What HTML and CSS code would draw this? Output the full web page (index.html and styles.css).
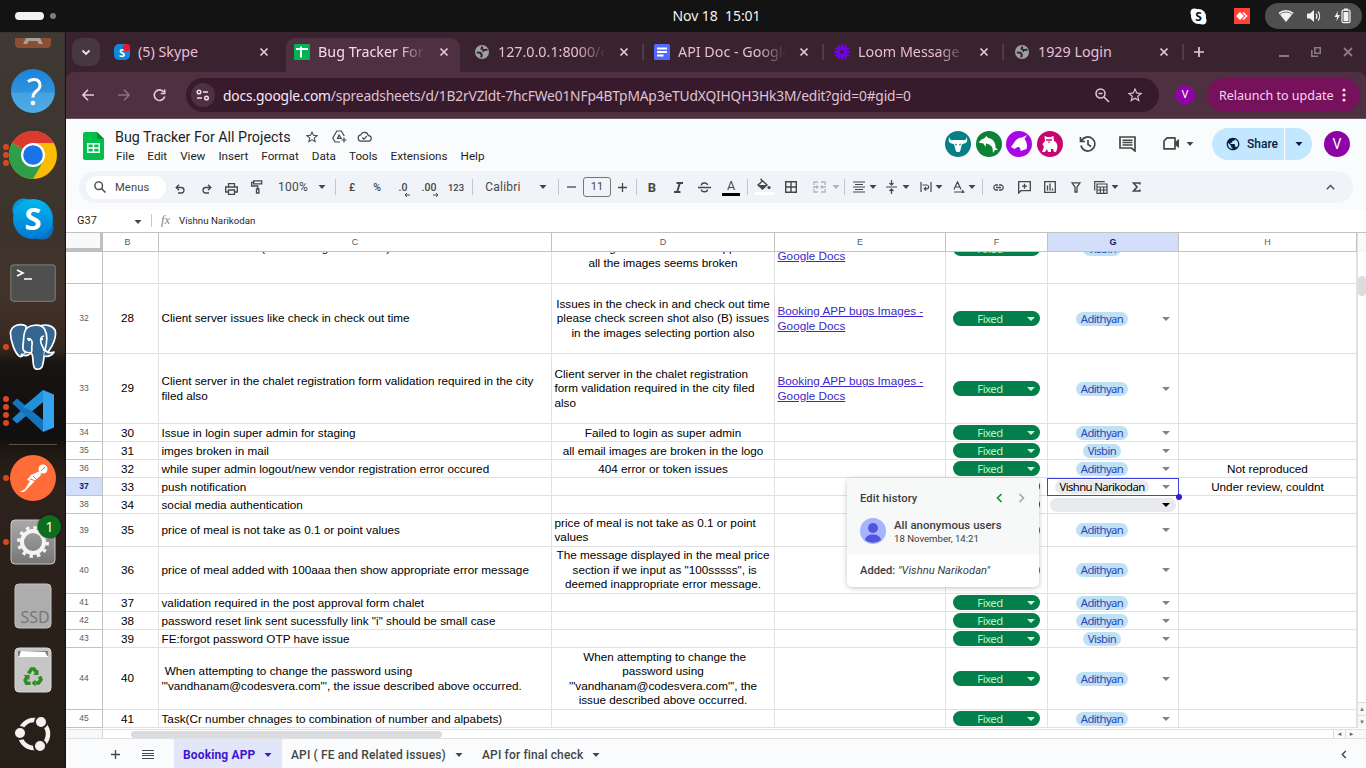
FILE: index.html
```html
<!DOCTYPE html>
<html lang="en">
<head>
<meta charset="utf-8">
<title>Bug Tracker For All Projects</title>
<link rel="stylesheet" href="styles.css">
</head>
<body>
<svg class="defs" width="0" height="0">
  <defs>
    <symbol id="close" viewBox="0 0 10 10"><path d="M1.5 1.5l7 7M8.500 1.500l-7 7" stroke="currentColor" stroke-width="1.700" fill="none"/></symbol>
    <symbol id="caret" viewBox="0 0 8 4"><path d="M.5 0h7L4 4z" fill="currentColor"/></symbol>
    <symbol id="globe" viewBox="0 0 24 24"><path fill="currentColor" d="M12 2C6.480 2 2 6.480 2 12s4.480 10 10 10 10-4.480 10-10S17.520 2 12 2zm-1 17.930c-3.950-.49-7-3.850-7-7.930 0-.62.080-1.210.21-1.790L9 15v1c0 1.100.9 2 2 2v1.930zm6.900-2.540c-.26-.81-1-1.390-1.900-1.390h-1v-3c0-.55-.45-1-1-1H8v-2h2c.55 0 1-.45 1-1V7h2c1.100 0 2-.9 2-2v-.41c2.930 1.190 5 4.060 5 7.410 0 2.080-.8 3.970-2.100 5.390z"/></symbol>
    <symbol id="favglobe" viewBox="0 0 14 14"><circle cx="7" cy="7" r="7" fill="#9aa0a6"/><path d="M1.800 7.500l3.500.3 1.500 1.700-.6 3M7.500 1.500L6.500 3.800 9 5l3.500-.3M9 5L7.500 6.500" stroke="#38232f" stroke-width="2" fill="none"/></symbol>
    <symbol id="star" viewBox="0 0 24 24"><path fill="currentColor" d="M22 9.240l-7.190-.62L12 2 9.190 8.630 2 9.240l5.460 4.730L5.820 21 12 17.270 18.180 21l-1.630-7.030L22 9.240zM12 15.400l-3.760 2.270 1-4.280-3.320-2.880 4.380-.38L12 6.100l1.710 4.040 4.380.38-3.320 2.880 1 4.280L12 15.400z"/></symbol>
  </defs>
</svg>

<header class="topbar">
  <div class="workspaces"><i class="ws-on"></i><i class="ws-off"></i></div>
  <div class="clock">Nov 18&nbsp; 15:01</div>
  <div class="tray">
    <svg width="17" height="17" viewBox="0 0 17 17"><circle cx="8.500" cy="8.500" r="7.500" fill="#fff"/><circle cx="4.500" cy="4.500" r="4" fill="#fff"/><circle cx="12.500" cy="12.500" r="4" fill="#fff"/><text x="8.500" y="13" text-anchor="middle" class="skype-s" fill="#131313">S</text></svg>
    <svg width="16" height="16" viewBox="0 0 16 16"><path fill="#ff4136" d="M0 0h16v16H0z"/><path fill="#fff" d="M2 8l4-4 4 4-4 4z"/><path d="M9 4.500L12.500 8 9 11.500" stroke="#fff" stroke-width="1.600" fill="none"/></svg>
    <div class="status">
      <svg width="16" height="14" viewBox="0 0 16 14"><path d="M0.500 3.800a11.500 11.500 0 0 1 15 0L8 13z" fill="#f2f2f2"/><path d="M1.500 5.600a9.500 9.500 0 0 1 13 0" stroke="#777" stroke-width="1" fill="none"/></svg>
      <svg width="16" height="14" viewBox="0 0 16 14"><path d="M1 4.500h3L8 1v12L4 9.500H1z" fill="#f2f2f2"/><path d="M10 4.500a4 4 0 0 1 0 5M12 2.500a7 7 0 0 1 0 9" stroke="#f2f2f2" stroke-width="1.200" fill="none"/></svg>
      <svg width="17" height="16" viewBox="0 0 17 16"><path d="M4 3L.5 9H3l-.5 4L6 7H3.500z" fill="#f2f2f2"/><rect x="8" y="2.200" width="8" height="12.500" rx="1.500" fill="none" stroke="#f2f2f2" stroke-width="1.200"/><path d="M10 .5h4v2h-4zM9.500 4h5v9.200h-5z" fill="#f2f2f2"/></svg>
    </div>
  </div>
</header>

<div class="desktop">
<aside class="dock">
  <div class="dock-cut"><svg width="36" height="10" viewBox="0 0 36 10"><path d="M0 0h36v6q0 4-4 4H4q-4 0-4-4z" fill="#8a4f35"/><path d="M8 6l3-6h14l3 6h-4l-2-3h-8l-2 3z" fill="#a8a09c"/></svg></div>
  <div class="app"><svg width="48" height="48"><defs><linearGradient id="hg" x2="0" y2="1"><stop offset="0" stop-color="#1b83d8"/><stop offset=".53" stop-color="#2f93dd"/><stop offset=".54" stop-color="#46a2e2"/><stop offset="1" stop-color="#4faae6"/></linearGradient></defs><circle cx="24" cy="24" r="22" fill="url(#hg)"/><path d="M19 14.500Q22 12.500 25 12.500q6 0 6 6 0 3-3.500 5.500-3.500 2.500-3.500 6.500" stroke="#fff" stroke-width="3" fill="none"/><circle cx="24" cy="36" r="2.300" fill="#fff"/></svg></div>
  <div class="app"><span class="dots n3"><i></i><i></i><i></i></span><svg width="48" height="48" viewBox="0 0 48 48"><circle cx="24" cy="24" r="24" fill="#fbbc04"/><path d="M24 24L3.200 12A24 24 0 0 1 44.800 12H24z" fill="#db3a2f"/><path d="M24 24L3.200 12A24 24 0 0 0 24 48L34.400 30z" fill="#2f9e49"/><circle cx="24" cy="24" r="12" fill="#fff"/><circle cx="24" cy="24" r="9.800" fill="#1a73e8"/></svg></div>
  <div class="app"><svg width="44" height="44" viewBox="0 0 44 44"><defs><linearGradient id="sk" x2="0" y2="1"><stop offset="0" stop-color="#00b7f0"/><stop offset="1" stop-color="#0078d4"/></linearGradient></defs><circle cx="13" cy="13" r="11.500" fill="#0797d8"/><circle cx="31" cy="31" r="11.500" fill="#0a6fc0"/><circle cx="22" cy="22" r="20" fill="url(#sk)"/><text x="22" y="33" text-anchor="middle" class="dock-s">S</text></svg></div>
  <div class="app"><svg width="46" height="38"><rect x=".8" y=".8" width="44.500" height="36.500" rx="3.500" fill="#4f4f4f" stroke="#77736f" stroke-width="1.200"/><path d="M7 6l6 3-6 3" stroke="#fff" stroke-width="1.700" fill="none"/><path d="M14 15h8" stroke="#fff" stroke-width="1.500"/></svg></div>
  <div class="app"><span class="dots n1"><i></i></span><svg width="48" height="48" viewBox="0 0 48 48"><g fill="#336791" stroke="#fff" stroke-width="1.700" stroke-linejoin="round"><path d="M31 3c5-2 12-1 15 4 2 6-2 16-7 22l-6 2z"/><path d="M17 3C11 0 3 2 1.500 9 1 17 6 30 10 33c3 2 5-2 8-5z"/><path d="M16 8c3-7 17-8 20-1 3 6 2 13 0 20-1 5-1 12-3 17-2 3-7 3-8 0-2-6 0-12-3-14-6 0-9-2-8-8 1-5 0-9 2-14z"/><path d="M36 27c2 3 6 3 9 2-2 4-7 5-10 4M22 30c-3 3-7 3-10 1" /><path d="M18 16c3-1 6 1 5 6-1 3 1 5-1 8M35 13c-3 0-4 3-3 7 1 3 3 5 3 8" fill="none"/></g><circle cx="20" cy="17" r="1.200" fill="#fff"/><circle cx="33" cy="16" r="1.200" fill="#fff"/></svg></div>
  <div class="app"><span class="dots n4"><i></i><i></i><i></i><i></i></span><svg width="42" height="42" viewBox="0 0 42 42"><path d="M31 0v12L5 33.500 0 29z" fill="#1c84cf"/><path d="M31 42V30L5 8.500 0 13z" fill="#1474bd"/><path d="M31 0v12L20 21 11 17z" fill="#2191dc"/><path d="M31 0l11 4.500v33L31 42z" fill="#35a3ed"/></svg></div>
  <div class="dock-line"></div>
  <div class="app"><span class="dots n1"><i></i></span><svg width="46" height="46" viewBox="0 0 46 46"><circle cx="23" cy="23" r="23" fill="#ff6c37"/><circle cx="33" cy="14" r="4.500" fill="#fff"/><path d="M30 16l-9 4-4 5 3 1-5 8-5 3h4l9-9 8-8z" fill="#fff"/><path d="M31 16l4-4M20 24l6 2M23 21l4 4" stroke="#ff6c37" stroke-width="1"/></svg></div>
  <div class="app"><span class="dots n1"><i></i></span><svg width="46" height="46" viewBox="0 0 46 46"><defs><linearGradient id="gg" x2="0" y2="1"><stop offset="0" stop-color="#aaa"/><stop offset="1" stop-color="#767676"/></linearGradient></defs><rect x="1" y="1" width="44" height="44" rx="4" fill="url(#gg)" stroke="#c8c8c8"/><circle cx="23" cy="23" r="11" fill="none" stroke="#f4f4f2" stroke-width="4"/><circle cx="23" cy="23" r="14" fill="none" stroke="#f4f4f2" stroke-width="4" stroke-dasharray="3.300 4.030"/></svg><b class="badge">1</b></div>
  <div class="app"><svg width="38" height="46" viewBox="0 0 38 46"><rect x="1" y="1" width="36" height="44" rx="4" fill="#adadad" stroke="#c4c4c4"/><text x="21" y="39.500" text-anchor="middle" class="ssd">SSD</text></svg></div>
  <div class="app"><svg width="38" height="46" viewBox="0 0 38 46"><rect x="1" y="1" width="36" height="44" rx="4" fill="#c6c6c6" stroke="#d8d8d8"/><path d="M4 4h30v5H4z" fill="#7e7e7e"/><path d="M5 10l2-6 24 1 3 5z" fill="#fff"/><g fill="none" stroke="#2c8c25" stroke-width="3.600"><path d="M14.500 26.500l3-4.500h2.500l2.500 3.500"/><path d="M25.500 29.500l1.500 3-2.500 3.500h-3"/><path d="M16.500 36.200h-4l-1.300-3 2-3.500"/></g><path d="M24.500 22.500v5.500h-5.500zM21.500 32.500v7l-4-3.500zM9.500 28h6v5z" fill="#2c8c25"/></svg></div>
  <div class="app"><svg width="38" height="38" viewBox="0 0 38 38"><circle cx="20" cy="19" r="14" fill="none" stroke="#f4f1ef" stroke-width="4.500"/><g fill="#f4f1ef" stroke="#2a221e" stroke-width="2"><circle cx="6" cy="18" r="6"/><circle cx="27" cy="7" r="6"/><circle cx="26" cy="31" r="6"/></g></svg></div>
</aside>

<main class="window">
  <div class="tabstrip">
    <button class="tab-search"><svg width="10" height="7" viewBox="0 0 10 7"><path d="M1.500 1.500L5 5l3.500-3.500" stroke="#f0e0ea" stroke-width="1.800" fill="none"/></svg></button>
    <div class="tab"><svg class="fav" width="16" height="16" viewBox="0 0 16 16"><rect width="16" height="16" rx="5" fill="#1287d8"/><text x="8" y="12.500" text-anchor="middle" class="fav-s">S</text><circle cx="12.500" cy="3.500" r="3.700" fill="#f5102e"/></svg><span class="tt t1">(5) Skype</span><svg class="x" width="10" height="10"><use href="#close"/></svg></div>
    <div class="tab active"><svg class="fav" width="16" height="16"><rect width="16" height="16" rx="1" fill="#00b551"/><path d="M2 5h12M7 2.500v11" stroke="#fff" stroke-width="2"/></svg><span class="tt t2">Bug Tracker For All</span><svg class="x" width="10" height="10"><use href="#close"/></svg></div>
    <div class="tab"><svg class="fav" width="16" height="14" viewBox="-1 0 16 14"><use href="#favglobe" width="14" height="14"/></svg><span class="tt t3">127.0.0.1:8000/cc</span><svg class="x" width="10" height="10"><use href="#close"/></svg><i class="sep"></i></div>
    <div class="tab"><svg class="fav" width="16" height="16"><rect width="16" height="16" rx="1.500" fill="#5468ff"/><path d="M3 4.500h10M3 8h10M3 11.500h6.500" stroke="#fff" stroke-width="1.900"/></svg><span class="tt t4">API Doc - Google D</span><svg class="x" width="10" height="10"><use href="#close"/></svg><i class="sep"></i></div>
    <div class="tab"><svg class="fav" width="16" height="16" viewBox="-8 -8 16 16"><g stroke="#7400f0" stroke-width="2.100"><path d="M0-8V8M-8 0H8M-4-6.900L4 6.900M4-6.900L-4 6.900M-6.900-4L6.900 4M6.900-4L-6.900 4"/></g><circle r="4.200" fill="#7400f0"/><circle r="2" fill="#38232f"/></svg><span class="tt t5">Loom Message - 1</span><svg class="x" width="10" height="10"><use href="#close"/></svg><i class="sep"></i></div>
    <div class="tab"><svg class="fav" width="16" height="14" viewBox="-1 0 16 14"><use href="#favglobe" width="14" height="14"/></svg><span class="tt t6">1929 Login</span><svg class="x" width="10" height="10"><use href="#close"/></svg><i class="sep"></i></div>
    <svg class="newtab" width="12" height="12"><path d="M6 1v10M1 6h10" stroke="#e4cddb" stroke-width="1.700"/></svg>
    <div class="winctl">
      <svg width="10" height="12"><path d="M0 10h10" stroke="#8b7a84" stroke-width="2"/></svg>
      <svg width="10" height="10"><path d="M3.800.8h5.500v5.500H3.800zM.8 3v6.200H7" stroke="#8b7a84" stroke-width="1.600" fill="none"/></svg>
      <svg width="10" height="10"><path d="M1 1l8 8M9 1L1 9" stroke="#8b7a84" stroke-width="1.800"/></svg>
    </div>
  </div>

  <div class="navbar">
    <svg width="12" height="12" viewBox="0 0 12 12"><path d="M12 6H1M6 .7L.9 6 6 11.300" stroke="#ecc5dc" stroke-width="1.600" fill="none"/></svg>
    <svg width="12" height="12" viewBox="0 0 12 12"><path d="M0 6h11M6 .7L11.100 6 6 11.300" stroke="#8f6c80" stroke-width="1.600" fill="none"/></svg>
    <svg width="13" height="13" viewBox="0 0 13 13"><path d="M10.800 3A5.300 5.300 0 1 0 11.700 7.500M11.700.5V4.500H7.700" stroke="#ecc5dc" stroke-width="1.600" fill="none"/></svg>
    <div class="omnibox">
      <span class="site"><svg width="14" height="12" viewBox="0 0 14 12"><g stroke="#eedfe8" stroke-width="1.500" fill="none"><circle cx="3" cy="3" r="1.800"/><path d="M7 3h5M1 9h5"/><circle cx="10.500" cy="9" r="1.800"/></g></svg></span>
      <span class="url"><em>docs.google.com</em>/spreadsheets/d/1B2rVZldt-7hcFWe01NFp4BTpMAp3eTUdXQIHQH3Hk3M/edit?gid=0#gid=0</span>
      <svg width="15" height="15" viewBox="0 0 15 15"><g stroke="#e0c6d5" stroke-width="1.500" fill="none"><circle cx="5.500" cy="5.500" r="4.500"/><path d="M9 9l5 5M3.500 5.500h4"/></g></svg>
      <svg class="bm" width="18" height="18"><use href="#star"/></svg>
    </div>
    <span class="profile">V</span>
    <div class="relaunch"><span>Relaunch to update</span><svg width="4" height="14"><g fill="#fbd3ef"><circle cx="2" cy="2" r="1.600"/><circle cx="2" cy="7" r="1.600"/><circle cx="2" cy="12" r="1.600"/></g></svg></div>
  </div>

  <div class="dochead">
    <svg class="logo" width="21" height="28" viewBox="0 0 21 28"><path d="M2 0h12l7 7v19q0 2-2 2H2q-2 0-2-2V2q0-2 2-2z" fill="#00c04b"/><path d="M14 0l7 7h-7z" fill="#00962f"/><path d="M4 11h13v10H4zM5.500 12.500v2.700h4.200v-2.700zM11.300 12.500v2.700h4.200v-2.700zM5.500 16.800v2.700h4.200v-2.700zM11.300 16.800v2.700h4.200v-2.700z" fill="#fff" fill-rule="evenodd"/></svg>
    <div class="doctitle">
      <div class="titleline"><h1>Bug Tracker For All Projects</h1>
        <svg width="14" height="14" viewBox="1 1 22 22"><use href="#star" width="24" height="24"/></svg>
        <svg width="15" height="13" viewBox="0 0 15 13"><g fill="none" stroke="#444746" stroke-width="1.200"><path d="M8 12H3L.8 8 4.800 1h4.500l3 5M5.500 8.300L7.100 5l2 3.300z"/><path d="M12 7.500v5M9.500 10h5"/></g></svg>
        <svg width="15" height="11" viewBox="0 0 15 11"><path d="M4 10.200a3.200 3.200 0 0 1-.3-6.300A4 4 0 0 1 11.300 4.600a2.800 2.800 0 0 1 .3 5.600z" fill="none" stroke="#444746" stroke-width="1.200"/><path d="M5.200 6.500l1.600 1.600 3-3" fill="none" stroke="#444746" stroke-width="1.200"/></svg>
      </div>
      <nav class="menus"><span>File</span><span>Edit</span><span>View</span><span>Insert</span><span>Format</span><span>Data</span><span>Tools</span><span>Extensions</span><span>Help</span></nav>
    </div>
    <div class="people">
      <svg width="26" height="26" viewBox="0 0 26 26"><circle cx="13" cy="13" r="13" fill="#077f86"/><path d="M4.500 6c0 3 1.500 3.500 5 3h7c3.500.5 5 0 5-3 1.500 3 1 6-2.500 6.500l-2.200 1-1.300 5.500-1 2h-3l-1-2-1.300-5.500-2.200-1C3.500 12 3 9 4.500 6z" fill="#fff"/><path d="M10 13l2 1M16 13l-2 1" stroke="#077f86"/></svg>
      <svg width="26" height="26" viewBox="0 0 26 26"><circle cx="13" cy="13" r="13" fill="#0b8235"/><path d="M2.500 11.500c1.500-1 2.500-3.500 5.500-4L10.500 5l1.500 2c5 .5 8 5 7.500 9.500L22 19l-3 0-2 3-.5-5c-1-2.500-3.500-4-6.500-4.500L9.500 16 7.500 12.500z" fill="#fff"/></svg>
      <svg width="26" height="26" viewBox="0 0 26 26"><circle cx="13" cy="13" r="13" fill="#a808e8"/><path d="M5 16l5-7 3-2 3-.5L21 4l-2.500 4c2.500 3 3 7 2 10l-6 2c0-3-1-4.500-3-4l-3 2z" fill="#fff"/></svg>
      <svg width="26" height="26" viewBox="0 0 26 26"><circle cx="13" cy="13" r="13" fill="#c9056d"/><path d="M7.500 5l3 1h3l3-1 .5 5c3 1 4 5 3 8l-1 3h-2l-1-3h-2v3h-3l-1-3-2 3H5l2-5-1.500-3 2.500-3z" fill="#fff"/><path d="M9 9h6M12 10.500v1.500" stroke="#c9056d" stroke-width="1.300"/></svg>
      <svg width="17" height="16" viewBox="0 0 17 16"><g fill="none" stroke="#444746" stroke-width="1.700"><path d="M2.500 5A7 7 0 1 1 2 9.500M1.500 1v4.500H6M9 4v4.500l3.200 2"/></g></svg>
      <svg width="17" height="16" viewBox="0 0 17 16"><path d="M1 1h15v14l-3.500-3H1z" fill="none" stroke="#444746" stroke-width="1.700"/><path d="M3.500 4.200h10M3.500 6.600h10M3.500 9h10" stroke="#444746" stroke-width="1.500"/></svg>
      <svg width="17" height="13" viewBox="0 0 17 13"><path d="M4 .9h8v11H1V4z" fill="none" stroke="#444746" stroke-width="1.700" stroke-linejoin="round"/><path d="M12 5l4-3v9l-4-3z" fill="#444746"/></svg>
      <svg class="g" width="8" height="4"><use href="#caret"/></svg>
    </div>
    <div class="share"><span><svg width="14" height="14" viewBox="1 1 22 22"><use href="#globe" width="24" height="24"/></svg>Share</span><span><svg width="8" height="4"><use href="#caret"/></svg></span></div>
    <div class="avatar">V</div>
  </div>

  <div class="toolwrap">
  <div class="tools">
    <div class="msearch"><svg width="12" height="12" viewBox="0 0 12 12"><circle cx="4.700" cy="4.700" r="3.800" fill="none" stroke="#444746" stroke-width="1.400"/><path d="M7.500 7.500L11.500 11.500" stroke="#444746" stroke-width="1.500"/></svg>Menus</div>
    <svg class="lo" width="11" height="10" viewBox="0 0 11 10"><path d="M4 .8L1.200 3.500 4 6.200M1.500 3.500h5.200a2.800 2.800 0 0 1 0 5.500H3" fill="none" stroke="#444746" stroke-width="1.300"/></svg>
    <svg class="lo" width="11" height="10" viewBox="0 0 11 10"><path d="M7 .8l2.800 2.700L7 6.200M9.500 3.500H4.300a2.800 2.800 0 0 0 0 5.500H8" fill="none" stroke="#444746" stroke-width="1.300"/></svg>
    <svg class="lo" width="13" height="12" viewBox="0 0 13 12"><g fill="none" stroke="#444746" stroke-width="1.300"><path d="M3.500 3.500v-3h6v3M3 9H.7V4h11.600v5H10"/><path d="M3.500 7h6v4.300h-6z"/></g></svg>
    <svg width="12" height="14" viewBox="0 0 12 14"><g fill="none" stroke="#444746" stroke-width="1.300"><path d="M2.700.8h8v3h-8zM2.700 2.300H.7V6h6v3"/><path d="M5.500 9h2.400v4H5.500z"/></g></svg>
    <span class="t">100%</span>
    <svg class="c" width="8" height="4"><use href="#caret"/></svg><i class="d"></i>
    <span class="s">£</span><span class="s">%</span>
    <span class="s dec">.0<svg width="6" height="4"><path d="M6 2H1M3 0L1 2l2 2" stroke="#444746" fill="none"/></svg></span>
    <span class="s dec">.00<svg width="6" height="4"><path d="M0 2h5M3 0l2 2-2 2" stroke="#444746" fill="none"/></svg></span>
    <span class="s n">123</span><i class="d"></i>
    <span class="t">Calibri</span><svg class="c" width="8" height="4"><use href="#caret"/></svg><i class="d"></i>
    <svg width="9" height="2"><path d="M0 1h9" stroke="#444746" stroke-width="1.300"/></svg>
    <span class="size">11</span>
    <svg width="9" height="9"><path d="M0 4.500h9M4.500 0v9" stroke="#444746" stroke-width="1.300"/></svg><i class="d"></i>
    <b class="bold">B</b>
    <svg width="9" height="11" viewBox="0 0 9 11"><path d="M2.500 1h6.500M0 10h6.500M5.800 1L3.200 10" stroke="#444746" stroke-width="1.900"/></svg>
    <svg width="13" height="11" viewBox="0 0 13 11"><path d="M0 5.500h13M3.300 3.500C3.300.2 9 .2 9.500 3M3.300 7.500c.3 3 6.200 3 6.200 0" stroke="#444746" stroke-width="1.400" fill="none"/></svg>
    <span class="acol">A</span><i class="d"></i>
    <svg class="fill" width="19" height="17" viewBox="0 0 19 17"><path d="M5.500.8L7.500 3 3 7l4.500 4L12 7 7.500 2.800" fill="none" stroke="#444746" stroke-width="1.400"/><path d="M3.500 7h8L7.500 11z" fill="#444746"/><circle cx="14" cy="9.500" r="1.600" fill="#444746"/><path d="M0 14h19v3H0z" fill="#fff"/></svg>
    <svg width="12" height="12"><path d="M.7.7h10.600v10.600H.7zM6 .7v10.600M.7 6h10.600" fill="none" stroke="#444746" stroke-width="1.400"/></svg>
    <svg width="13" height="12" viewBox="0 0 13 12"><g stroke="#b1b4b8" stroke-width="1.300" fill="none"><path d="M5 1H1v3M8 1h4v3M5 11H1V8M8 11h4V8M0 6h5M13 6H8M3.500 4.500L5 6 3.500 7.500M9.500 4.500L8 6l1.500 1.500"/></g></svg>
    <svg class="c dim" width="8" height="4"><use href="#caret"/></svg><i class="d"></i>
    <svg width="12" height="12"><path d="M0 1h12M2 3.500h8M0 6h12M2 8.500h8M0 11h12" stroke="#444746" stroke-width="1.200"/></svg>
    <svg class="c" width="8" height="4"><use href="#caret"/></svg>
    <svg width="11" height="14" viewBox="0 0 11 14"><path d="M0 7h11M5.500 0v4.500M3.500 3l2 2 2-2M5.500 14V9.500M3.500 11l2-2 2 2" stroke="#444746" stroke-width="1.200" fill="none"/></svg>
    <svg class="c" width="8" height="4"><use href="#caret"/></svg>
    <svg class="e" width="12" height="12" viewBox="0 0 12 12"><path d="M1 1v10M11 1v10M2.500 4h4.200a1.800 1.800 0 0 1 0 3.800H4.500M6 6L4.300 7.800 6 9.600" stroke="#444746" stroke-width="1.200" fill="none"/></svg>
    <svg class="c" width="8" height="4"><use href="#caret"/></svg>
    <svg class="e" width="12" height="12" viewBox="0 0 12 12"><path d="M1 8.500L4.500.8 8 8.500M2.300 6h4.400M1 11h9.500M9 9.300l1.800 1.700L9 12" stroke="#444746" stroke-width="1.200" fill="none"/></svg>
    <svg class="c" width="8" height="4"><use href="#caret"/></svg><i class="d"></i>
    <svg width="13" height="7" viewBox="0 0 13 7"><path d="M6 6H3.500a2.700 2.700 0 0 1 0-5H6M7 1h2.500a2.700 2.700 0 0 1 0 5H7M4 3.500h5" stroke="#444746" stroke-width="1.300" fill="none"/></svg>
    <svg width="13" height="13" viewBox="0 0 13 13"><path d="M.7 12V.7h11.600v9H3zM6.500 2.700v5M4 5.200h5" stroke="#444746" stroke-width="1.300" fill="none"/></svg>
    <svg width="12" height="12"><path d="M.7.7h10.600v10.600H.7zM3.500 9.500v-5M6 9.500v-7M8.500 9.500V7.500" stroke="#444746" stroke-width="1.300" fill="none"/></svg>
    <svg width="10" height="11" viewBox="0 0 10 11"><path d="M1 .8h8L6 5v5H4V5z" stroke="#444746" stroke-width="1.300" fill="none"/></svg>
    <svg width="14" height="13" viewBox="0 0 14 13"><path d="M.7 9.500V.7h10M3 3h10v9.300H3zM3 6h10M3 9h10M6.300 6v6M9.700 6v6" stroke="#444746" stroke-width="1.200" fill="none"/></svg>
    <svg class="c" width="8" height="4"><use href="#caret"/></svg>
    <svg width="9" height="10" viewBox="0 0 9 10"><path d="M7.800 2.500V1H1.500L5 5 1.500 9h6.300V7.500" stroke="#444746" stroke-width="1.700" fill="none"/></svg>
    <i></i>
    <svg width="9" height="6"><path d="M.8 5.200L4.500 1.500l3.700 3.700" stroke="#444746" stroke-width="1.300" fill="none"/></svg>
  </div>
  </div>

  <div class="fbar"><span class="ref">G37</span><svg width="8" height="4"><use href="#caret"/></svg><i></i><span class="fx">fx</span><span class="fval">Vishnu Narikodan</span></div>

  <div class="gridarea">
    <div class="sheet">
      <div class="row colhead"><div class="corner"></div><div>B</div><div>C</div><div>D</div><div>E</div><div>F</div><div class="sel">G</div><div>H</div></div>
      <div class="body"><div class="rows">
        <div class="row r70"><div>31</div><div>27</div><div class="l">Client server issue (mobile image alteration)</div><div>In the booking view section<br>image section in mobile app<br>all the images seems broken</div><div class="l"><a>Booking APP bugs Images -<br>Google Docs</a></div><div><span class="fixed">Fixed</span></div><div class="as"><span class="chip">Visbin</span></div><div></div></div>
        <div class="row r70"><div>32</div><div>28</div><div class="l">Client server issues like check in check out time</div><div>Issues in the check in and check out time<br>please check screen shot also (B) issues<br>in the images selecting portion also</div><div class="l"><a>Booking APP bugs Images -<br>Google Docs</a></div><div><span class="fixed">Fixed</span></div><div class="as"><span class="chip">Adithyan</span></div><div></div></div>
        <div class="row r70"><div>33</div><div>29</div><div class="l">Client server in the chalet registration form validation required in the city<br>filed also</div><div class="l">Client server in the chalet registration<br>form validation required in the city filed<br>also</div><div class="l"><a>Booking APP bugs Images -<br>Google Docs</a></div><div><span class="fixed">Fixed</span></div><div class="as"><span class="chip">Adithyan</span></div><div></div></div>
        <div class="row r18"><div>34</div><div>30</div><div class="l">Issue in login super admin for staging</div><div>Failed to login as super admin</div><div></div><div><span class="fixed">Fixed</span></div><div class="as"><span class="chip">Adithyan</span></div><div></div></div>
        <div class="row r18"><div>35</div><div>31</div><div class="l">imges broken in mail</div><div>all email images are broken in the logo</div><div></div><div><span class="fixed">Fixed</span></div><div class="as"><span class="chip">Visbin</span></div><div></div></div>
        <div class="row r18"><div>36</div><div>32</div><div class="l">while super admin logout/new vendor registration error occured</div><div>404 error or token issues</div><div></div><div><span class="fixed">Fixed</span></div><div class="as"><span class="chip">Adithyan</span></div><div>Not reproduced</div></div>
        <div class="row r18"><div class="sel">37</div><div>33</div><div class="l">push notification</div><div></div><div></div><div><span class="fixed red"></span></div><div class="as cur"><span class="chip grey">Vishnu Narikodan</span></div><div>Under review, couldnt</div></div>
        <div class="row r18"><div>38</div><div>34</div><div class="l">social media authentication</div><div></div><div></div><div><span class="fixed red"></span></div><div class="as empty"><span class="chip grey wide"></span></div><div></div></div>
        <div class="row r33"><div>39</div><div>35</div><div class="l">price of meal is not take as 0.1 or point values</div><div class="l">price of meal is not take as 0.1 or point<br>values</div><div></div><div><span class="fixed">Fixed</span></div><div class="as"><span class="chip">Adithyan</span></div><div></div></div>
        <div class="row r47"><div>40</div><div>36</div><div class="l">price of meal added with 100aaa then show appropriate error message</div><div>The message displayed in the meal price<br>&nbsp;section if we input as "100sssss", is<br>deemed inappropriate error message.</div><div></div><div><span class="fixed">Fixed</span></div><div class="as"><span class="chip">Adithyan</span></div><div></div></div>
        <div class="row r18"><div>41</div><div>37</div><div class="l">validation required in the post approval form chalet</div><div></div><div></div><div><span class="fixed">Fixed</span></div><div class="as"><span class="chip">Adithyan</span></div><div></div></div>
        <div class="row r18"><div>42</div><div>38</div><div class="l">password reset link sent sucessfully link "i" should be small case</div><div></div><div></div><div><span class="fixed">Fixed</span></div><div class="as"><span class="chip">Adithyan</span></div><div></div></div>
        <div class="row r18"><div>43</div><div>39</div><div class="l">FE:forgot password OTP have issue</div><div></div><div></div><div><span class="fixed">Fixed</span></div><div class="as"><span class="chip">Visbin</span></div><div></div></div>
        <div class="row r62"><div>44</div><div>40</div><div class="l">&nbsp;When attempting to change the password using<br>'"vandhanam@codesvera.com"', the issue described above occurred.</div><div>&nbsp;When attempting to change the<br>password using<br>'"vandhanam@codesvera.com"', the<br>issue described above occurred.</div><div></div><div><span class="fixed">Fixed</span></div><div class="as"><span class="chip">Adithyan</span></div><div></div></div>
        <div class="row r18"><div>45</div><div>41</div><div class="l">Task(Cr number chnages to combination of number and alpabets)</div><div></div><div></div><div><span class="fixed">Fixed</span></div><div class="as"><span class="chip">Adithyan</span></div><div></div></div>
      </div></div>
    </div>
    <div class="vscroll"><i class="vhead"></i><i class="vthumb"></i><i class="vbtn">▴</i><i class="vbtn">▾</i></div>
    <div class="history">
      <div class="htop">
        <div class="htitle"><span>Edit history</span><svg width="7" height="10"><path d="M5.500 1L1.500 5l4 4" stroke="#0b8f3d" stroke-width="1.600" fill="none"/></svg><svg width="7" height="10"><path d="M1.500 1l4 4-4 4" stroke="#a4a6a8" stroke-width="1.600" fill="none"/></svg></div>
        <div class="huser"><svg width="26" height="26" viewBox="0 0 26 26"><circle cx="13" cy="13" r="13" fill="#a3b5ff"/><circle cx="13" cy="10" r="5" fill="#5552e0"/><path d="M5 22q1-5.500 8-5.500t8 5.500a13 13 0 0 1-16 0z" fill="#5552e0"/></svg><div><b>All anonymous users</b><small>18 November, 14:21</small></div></div>
      </div>
      <div class="hadd"><b>Added:</b> <em>"Vishnu Narikodan"</em></div>
    </div>
  </div>

  <div class="hscroll"><i class="hcorner"></i><i class="hthumb"></i><span></span><i class="hbtn">◂</i><i class="hbtn">▸</i><i class="hend"></i></div>

  <footer class="sheets">
    <svg width="9" height="9"><path d="M0 4.500h9M4.500 0v9" stroke="#444746" stroke-width="1.300"/></svg>
    <svg width="12" height="9"><path d="M0 .5h12M0 3.500h12M0 5.500h12M0 8.500h12" stroke="#444746" stroke-width="1"/></svg>
    <div class="stab on"><span>Booking APP</span><svg width="8" height="4"><use href="#caret"/></svg></div>
    <div class="stab s2"><span>API ( FE and Related issues)</span><svg width="8" height="4"><use href="#caret"/></svg></div>
    <div class="stab s3"><span>API for final check</span><svg width="8" height="4"><use href="#caret"/></svg></div>
    <svg class="more" width="6" height="9"><path d="M4.800 1L1.300 4.500 4.800 8" stroke="#444746" stroke-width="1.400" fill="none"/></svg>
  </footer>
</main>
</div>
</body>
</html>
```

FILE: styles.css
```css
* { box-sizing: border-box; }
body { margin: 0; width: 1366px; height: 768px; overflow: hidden; background: #131313; font-family: Roboto, "Liberation Sans", sans-serif; color: #1f1f1f; }
svg { display: block; flex: none; }
i { font-style: normal; }
.defs { position: absolute; }

/* desktop top bar */
.topbar { height: 32px; background: #131313; display: grid; grid-template-columns: 1fr auto 1fr; align-items: center; color: #f2f2f2; padding-right: 4px; padding-left: 15px; }
.workspaces { display: flex; align-items: center; gap: 6px; }
.ws-on { width: 29px; height: 8px; border-radius: 4px; background: #f2f2f2; }
.ws-off { width: 6px; height: 6px; border-radius: 3px; background: #7d7d7d; }
.clock { font: 14px "Noto Sans", sans-serif; margin-left: 56px; letter-spacing: -.05px; padding-bottom: 2px; }
.tray { display: flex; justify-content: flex-end; align-items: center; }
.tray > svg { margin-right: 27px; }
.tray > svg + svg { margin-right: 15px; }
.status { width: 97px; height: 26px; border-radius: 13px; background: #4f4f4f; display: flex; align-items: center; padding-left: 13px; gap: 12px; }
.skype-s { font: bold 12px "Noto Sans", sans-serif; }
.fav-s { font: bold 11px "Noto Sans", sans-serif; fill: #fff; }

.desktop { display: flex; height: 736px; }

/* dock */
.dock { width: 66px; background: linear-gradient(#3f3934 0, #3d342d 24%, #42332a 36%, #35271f 43%, #181412 45%, #100f0f 55%, #1f1813 57%, #2e231c 62%, #2a2019 80%, #262019 100%); box-shadow: inset -1px 0 1px #15110f; padding-top: 6px; }
.dock-cut { height: 21px; padding-left: 15px; }
.app { height: 64px; display: flex; align-items: center; justify-content: center; position: relative; }
.dock-line { height: 1px; margin: 1px 9px; background: #57524e; }
.dots { position: absolute; left: 3px; top: 0; height: 64px; display: flex; flex-direction: column; justify-content: center; gap: 2px; }
.dots i { width: 6px; height: 6px; border-radius: 3px; background: #d9481c; }
.dock-s { font: bold 31px "Noto Sans", sans-serif; fill: #fff; }
.ssd { font: 16px "Noto Sans", sans-serif; fill: #777; }
.badge { position: absolute; left: 38px; top: 5px; width: 23px; height: 23px; border-radius: 12px; background: #0c6d1c; color: #fff; font: 14px/23px "Noto Sans", sans-serif; text-align: center; box-shadow: 0 0 2px #000; }

.window { width: 1300px; display: flex; flex-direction: column; background: #fff; }
.window > * { flex: none; }

/* tab strip */
.tabstrip { height: 40px; background: #38232f; display: flex; padding-left: 6px; align-items: center; font: 14.300px "Noto Sans", sans-serif; color: #e8bfd5; }
.tab-search { width: 28px; height: 28px; border: 0; border-radius: 9px; background: #463740; padding: 0; display: flex; align-items: center; justify-content: center; margin-right: 6px; }
.tab { width: 180px; height: 40px; display: flex; align-items: center; padding-left: 8px; position: relative; }
.tab .tt { width: 110px; margin-left: 8px; overflow: hidden; white-space: nowrap; mask-image: linear-gradient(90deg, #000 80px, transparent 108px); padding-bottom: 1px; }
.tab .t1, .tab .t6 { mask-image: none; }
.tab .x { margin-left: 11px; color: #ecc5dc; }
.sep { width: 2px; height: 16px; background: #523b48; margin-left: 13px; }
.tab.active { color: #f5dcea; }
.tab.active::before { content: ""; position: absolute; left: 0; top: 6px; width: 174px; height: 34px; border-radius: 9px 9px 0 0; background: #4f3041; z-index: 0; }
.tab.active > * { position: relative; }
.newtab { margin-left: 7px; }
.winctl { margin-left: auto; display: flex; gap: 22px; align-items: center; padding-right: 13px; }

/* navigation bar */
.navbar { height: 47px; background: #4f3041; border-bottom: 1px solid #6a5560; border-radius: 8px 8px 0 0; display: flex; align-items: center; box-shadow: 0 -8px 0 -0px #38232f; clip-path: inset(0); }
.window { background-image: linear-gradient(#38232f 60px, transparent 60px); }
.navbar > svg:nth-child(1) { margin-left: 16px; }
.navbar > svg:nth-child(2) { margin-left: 24px; }
.navbar > svg:nth-child(3) { margin-left: 23px; margin-right: 20px; }
.omnibox { width: 973px; height: 34px; border-radius: 17px; background: #371b2c; display: flex; align-items: center; padding-left: 5px; color: #dfc3d3; }
.site { width: 24px; height: 24px; border-radius: 12px; background: #4f3041; display: flex; align-items: center; justify-content: center; }
.url { font: 13.800px "Noto Sans", sans-serif; margin-left: 8px; width: 872px; white-space: nowrap; letter-spacing: -.17px; }
.url em { font-style: normal; color: #fbe8f3; }
.bm { margin-left: 16px; }
.profile { margin-left: 16px; width: 20px; height: 20px; border-radius: 10px; background: #8e03a5; color: #fff; font-size: 11px; line-height: 20px; text-align: center; }
.relaunch { margin-left: 12px; width: 153px; height: 34px; border-radius: 17px; background: #76115c; color: #fbd3ef; font: 12.500px "Noto Sans", sans-serif; display: flex; align-items: center; justify-content: space-between; padding: 0 14px 0 12px; white-space: nowrap; }

/* document header */
.dochead { height: 49px; background: #f9fbfd; display: flex; align-items: center; padding-left: 17px; }
.logo { margin-top: 4px; }
.doctitle { margin-left: 11px; width: 830px; padding-top: 4px; }
.titleline { display: flex; align-items: center; height: 20px; color: #444746; }
h1 { margin: 0; font: 14.300px Roboto, sans-serif; color: #1f1f1f; width: 175px; white-space: nowrap; }
.titleline svg:nth-child(2) { margin-left: 15px; }
.titleline svg:nth-child(3) { margin-left: 13px; }
.titleline svg:nth-child(4) { margin-left: 10px; }
.menus { display: flex; gap: 13px; font-size: 11.700px; line-height: 18px; color: #1f1f1f; padding-left: 1px; }
.people { display: flex; align-items: center; height: 48px; width: 267px; }
.people svg { margin-right: 4.600px; }
.people svg:nth-child(4) { margin-right: 16px; }
.people svg:nth-child(5) { margin-right: 23px; }
.people svg:nth-child(6) { margin-right: 27px; }
.people svg:nth-child(7) { margin-right: 6px; }
.g { color: #444746; }
.share { display: flex; gap: 1px; font-weight: 500; font-size: 12px; color: #071d45; }
.share span { height: 32px; background: #c2e7ff; display: flex; align-items: center; justify-content: center; gap: 7px; }
.share span:first-child { width: 72px; border-radius: 16px 0 0 16px; padding-left: 8px; }
.share span:last-child { width: 27px; border-radius: 0 16px 16px 0; }
.avatar { width: 26px; height: 26px; border-radius: 13px; background: #8e03a5; color: #fff; font-size: 14px; line-height: 26px; text-align: center; margin-left: 12px; }

/* format toolbar */
.toolwrap { background: #f9fbfd; height: 42px; padding: 3px 13px 0; }
.tools { height: 32px; border-radius: 16px; background: #f0f4f9; padding-left: 7px; display: grid; align-items: center; justify-items: center; color: #444746; font-size: 12px;
  grid-template-columns: 80px 28px 24px 26px 26px 46px 12px 15px 18px 32px 20px 32px 22px 10px 52px 28px 2px 24px 28px 22px 6px 26px 26px 26px 28px 4px 30px 24px 32px 2px 14px 16px 12px 24px 6px 25px 10px 23px 10px 10px 22px 30px 22px 30px 20px 8px 34px 1fr 46px; }
.tools .msearch { width: 80px; height: 23px; border-radius: 12px; background: #fff; display: flex; align-items: center; padding-left: 8px; gap: 9px; font-size: 11.200px; letter-spacing: .1px; }
.tools .d { width: 1px; height: 16px; background: #c4c7c9; }
.tools .lo { margin-top: 3px; }
.tools .t { letter-spacing: .2px; }
.tools .s { font-size: 10.500px; font-weight: 500; }
.tools .n { font-size: 9.500px; }
.tools .c { justify-self: center; margin: 0 -2px; }
.dec { position: relative; }
.dec svg { position: absolute; right: -3px; bottom: -3px; }
.size { width: 28px; height: 20px; border: 1px solid #747775; border-radius: 3px; text-align: center; line-height: 18px; font-size: 11px; }
.bold { font-size: 13px; }
.acol { width: 18px; height: 16px; border-bottom: 3px solid #000; text-align: center; line-height: 12px; font-size: 12.500px; margin-top: 1px; }
.fill { margin-top: -1px; }
.dim { color: #b1b4b8; }
.tools .e { justify-self: end; margin-right: 2px; }

/* formula bar */
.fbar { height: 22px; display: flex; align-items: center; background: #fff; font-size: 11px; padding: 0 0 2px 11px; color: #1f1f1f; }
.ref { width: 57px; }
.fbar svg { color: #444746; margin-top: 3px; }
.fbar i { width: 1px; height: 13px; background: #c7c7c7; margin: 0 9px; }
.fx { font: italic 12.500px "Liberation Serif", serif; color: #80868b; width: 18px; }
.fval { font-size: 9.700px; }

/* grid */
.gridarea { display: flex; height: 496px; position: relative; background: #fff; border-top: 1px solid #c0c3c0; }
.sheet { width: 1291px; }
.row { display: grid; grid-template-columns: 37px 56px 393px 223px 171px 102px 131px 178px; font: 11.730px/14.500px "Liberation Sans", Arial, sans-serif; color: #000; }
.row > div { border-right: 1px solid #e1e1e1; border-bottom: 1px solid #e1e1e1; display: flex; align-items: center; justify-content: center; text-align: center; white-space: nowrap; padding: 0 3px; }
.row > .l { justify-content: flex-start; text-align: left; padding-left: 2.500px; }
.row > div:nth-child(2) { padding-right: 9px; }
.colhead { height: 19px; }
.colhead > div { font-size: 9px; color: #575b5f; border-color: #c0c3c0; }
.colhead > .corner { background: #f8f9fa; border-right: 3px solid #bfbfbf; border-bottom: 4px solid #bfbfbf; }
.row > .sel { background: #d3defb; font-weight: bold; color: #061d6b; }
.body { height: 476px; overflow: hidden; }
.rows { margin-top: -38px; }
.rows .row > div:first-child { font-size: 8.500px; color: #575b5f; border-color: #c0c3c0; padding-top: 0; }
.rows .row > div.sel:first-child { color: #061d6b; }
.r70 { height: 70px; } .r18 { height: 18px; } .r33 { height: 33px; } .r47 { height: 47px; } .r62 { height: 62px; }
.r18 > div { padding-top: 2px; }
.r18 > div:nth-child(6) { padding-top: 0; }
.r18 > .as { padding-top: 1px; }
a { color: #3b28cc; text-decoration: underline; }
.fixed { width: 87px; height: 15px; border-radius: 7.500px; background: #037f4c; color: #c3f2c0; font: 11.300px/15px "Noto Sans", sans-serif; letter-spacing: -.5px; position: relative; padding-right: 13px; }
.fixed::after, .as::after { content: ""; border: 4px solid transparent; border-top-color: #c8f5c5; border-bottom: 0; position: absolute; right: 5px; top: 6px; }
.red { background: #b10202; }
.row > .as { position: relative; padding-right: 25px; }
.row > .as::after { border-top-color: #808488; right: 8px; top: calc(50% - 2px); }
.chip { height: 14px; border-radius: 7px; background: #bfe1f6; color: #2b46b8; font: 11.300px/14px "Noto Sans", sans-serif; padding: 0 4.500px; letter-spacing: -.6px; }
.grey { background: #e8eaed; color: #000; }
.row > .cur { box-shadow: -1px 0 0 #3d43dc, inset 0 1px 0 #3d43dc; border-color: #3d43dc; }
.cur::before { content: ""; position: absolute; right: -4px; bottom: -5px; width: 6px; height: 6px; border-radius: 3px; background: #3a14d8; z-index: 2; }
.row > .empty { padding: 0 2px; }
.wide { width: 126px; }
.row > .empty::after { border-top-color: #000; }

.vscroll { width: 9px; display: flex; flex-direction: column; border-left: 1px solid #e1e1e1; }
.vhead { height: 19px; background: #f8f9fa; }
.vthumb { height: 20px; margin-top: 24px; border-radius: 4px; background: #dadce0; margin-bottom: auto; }
.vbtn { height: 13px; border-top: 1px solid #dcdcdc; background: #f8f8f8; color: #777; font: 7px/12px "DejaVu Sans", sans-serif; text-align: center; }

/* edit history popup */
.history { position: absolute; left: 781px; top: 245px; width: 192px; height: 109px; background: #fff; border-radius: 5px; box-shadow: 0 1px 5px rgba(60,64,67,.32); color: #3c4043; overflow: hidden; z-index: 3; }
.htop { height: 77px; background: #f7f8f8; padding: 12px 14px 0 13px; }
.htitle { display: flex; align-items: center; font-weight: 500; font-size: 11.200px; height: 16px; gap: 15px; letter-spacing: .1px; }
.htitle span { margin-right: auto; }
.huser { display: flex; margin-top: 12px; gap: 8px; }
.huser b { display: block; font-weight: 500; font-size: 11.400px; line-height: 14px; white-space: nowrap; letter-spacing: .05px; }
.huser small { display: block; font-size: 9.600px; line-height: 13px; }
.hadd { padding: 9px 13px; font-size: 11.200px; line-height: 13px; white-space: nowrap; }
.hadd b { font-weight: 500; }

.hscroll { height: 10px; display: flex; align-items: center; border-top: 1px solid #e1e1e1; margin-top: 1px; border-bottom: 1px solid #e1e1e1; background: #fff; }
.hcorner { width: 37px; height: 8px; background: #f8f9fa; border-right: 1px solid #d0d0d0; }
.hthumb { width: 311px; height: 7px; border-radius: 4px; background: #dadce0; margin-left: 28px; }
.hscroll span { flex: 1; }
.hbtn { width: 12px; height: 8px; border-left: 1px solid #dcdcdc; background: #fafafa; font: 7px/8px "DejaVu Sans", sans-serif; color: #666; text-align: center; }
.hend { width: 9px; height: 8px; background: #f8f9fa; }

/* sheet tabs */
.sheets { height: 29px; background: #f9fbfd; display: flex; align-items: center; padding-left: 45px; color: #444746; font-weight: 500; font-size: 12px; letter-spacing: .14px; }
.sheets > svg { margin-bottom: -2px; margin-right: 22px; }
.sheets > svg:nth-child(2) { margin-right: 20px; }
.stab { height: 29px; display: flex; align-items: center; padding-top: 3px; }
.stab span { white-space: nowrap; }
.stab svg { margin-left: auto; }
.stab.on { width: 108px; background: #e1e6f9; color: #3f16d0; font-weight: bold; padding-left: 9px; padding-right: 10px; }
.s2 { width: 181px; padding-left: 9px; }
.s3 { width: 137px; padding-left: 19px; }
.sheets .more { margin-left: auto; margin-right: 19px; }
```
